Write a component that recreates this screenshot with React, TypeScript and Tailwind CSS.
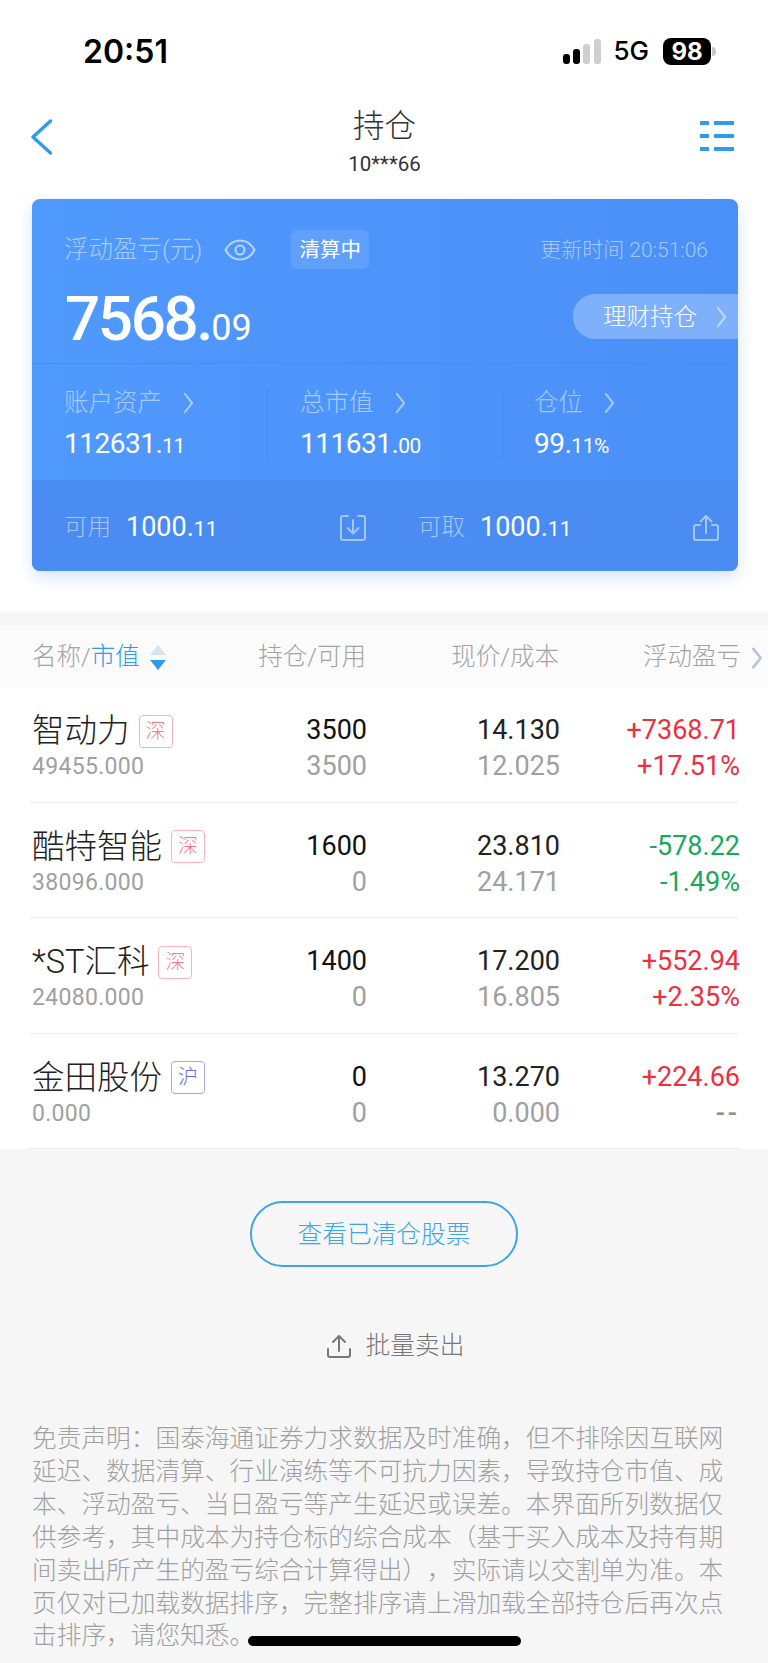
import React from "react";

const CJK = "font-['Roboto','Noto_Sans_CJK_SC',sans-serif]";

function Chevron({ className, sw = 2.2 }: { className: string; sw?: number }) {
  return (
    <svg viewBox="0 0 12 24" className={className} fill="none" stroke="currentColor" strokeWidth={sw} strokeLinecap="round" strokeLinejoin="round">
      <path d="M2 2l8 10-8 10" />
    </svg>
  );
}

function TrayUp({ className }: { className: string }) {
  return (
    <svg viewBox="0 0 26 27" className={className} fill="none" stroke="currentColor" strokeWidth="2" strokeLinecap="round" strokeLinejoin="round">
      <path d="M7 11H3a2 2 0 0 0-2 2v11a2 2 0 0 0 2 2h20a2 2 0 0 0 2-2V13a2 2 0 0 0-2-2h-4" />
      <path d="M13 19V2M7.500 7.500 13 2l5.500 5.500" />
    </svg>
  );
}

function TrayDown({ className }: { className: string }) {
  return (
    <svg viewBox="0 0 26 27" className={className} fill="none" stroke="currentColor" strokeWidth="2" strokeLinecap="round" strokeLinejoin="round">
      <path d="M8 2H3a2 2 0 0 0-2 2v20a2 2 0 0 0 2 2h20a2 2 0 0 0 2-2V4a2 2 0 0 0-2-2h-5" />
      <path d="M13 6v13M7.500 14l5.500 5.500 5.500-5.500" />
    </svg>
  );
}

function Stat({ label, int, dec, left }: { label: string; int: string; dec: string; left: string }) {
  return (
    <div className={left}>
      <div className="flex items-center h-[24px] text-[24.500px] leading-[24px] text-white/50 font-light">
        <span>{label}</span>
        <Chevron className="w-[11px] h-[22px] ml-[21px] text-white/50" />
      </div>
      <div className="mt-[15px] h-[28px] flex items-baseline text-white leading-[28px] tracking-[-0.5px]">
        <span className="text-[28px]">{int}</span>
        <span className="text-[21px]">{dec}</span>
      </div>
    </div>
  );
}

const rows = [
  { name: "智动力", ex: "深", mv: "49455.000", a: "3500", b: "3500", p: "14.130", c: "12.025", x: "+7368.71", y: "+17.51%", col: "text-[#ee2f3f]" },
  { name: "酷特智能", ex: "深", mv: "38096.000", a: "1600", b: "0", p: "23.810", c: "24.171", x: "-578.22", y: "-1.49%", col: "text-[#19a95b]" },
  { name: "*ST汇科", ex: "深", mv: "24080.000", a: "1400", b: "0", p: "17.200", c: "16.805", x: "+552.94", y: "+2.35%", col: "text-[#ee2f3f]" },
  { name: "金田股份", ex: "沪", mv: "0.000", a: "0", b: "0", p: "13.270", c: "0.000", x: "+224.66", y: "--", col: "text-[#ee2f3f]" },
];

export default function App() {
  return (
    <div className={`${CJK} relative w-[768px] h-[1663px] overflow-hidden bg-[#f6f6f6]`}>
      {/* top white area */}
      <div className="bg-white h-[611px]">
        {/* status bar */}
        <div className="h-[100px] pt-[34px] pl-[83px] pr-[52px] flex items-start justify-between">
          <span className="font-['Inter',sans-serif] text-[32px] leading-[36px] font-semibold text-black">20:51</span>
          <div className="flex items-center h-[36px] relative top-[-1px]">
            <svg viewBox="0 0 38 25" className="w-[38px] h-[25px]">
              <rect x="0" y="15" width="7" height="10" rx="3" fill="#000" />
              <rect x="10" y="10" width="7" height="15" rx="3" fill="#000" />
              <rect x="20" y="5" width="7" height="20" rx="3" fill="#cfcfcf" />
              <rect x="31" y="0" width="7" height="25" rx="3" fill="#cfcfcf" />
            </svg>
            <span className="ml-[12px] font-['Inter',sans-serif] text-[26px] leading-[36px] font-medium text-black">5G</span>
            <span className="ml-[14px] w-[48px] h-[27px] rounded-[8px] bg-black text-white font-['Inter',sans-serif] font-bold text-[24px] leading-[27px] text-center">98</span>
            <span className="ml-[1px] w-[4px] h-[9px] rounded-r-full bg-[#c9c9c9]" />
          </div>
        </div>
        {/* nav */}
        <div className="h-[99px] pl-[31px] pr-[34px] grid grid-cols-[1fr_auto_1fr] items-start">
          <svg viewBox="0 0 21 36" className="mt-[19px] w-[21px] h-[36px] text-[#2f9bec]" fill="none" stroke="currentColor" strokeWidth="3.400" strokeLinecap="round" strokeLinejoin="round">
            <path d="M19.500 2 2 18l17.500 16" />
          </svg>
          <div className="flex flex-col items-center mt-[9px] text-[#333] relative left-[2px]">
            <div className="text-[31.500px] leading-[36px] font-light">持仓</div>
            <div className="mt-[8px] text-[20.500px] leading-[22px]">10***66</div>
          </div>
          <div className="mt-[21px] w-[34px] justify-self-end flex flex-col gap-[9px]">
            {[0, 1, 2].map((i) => (
              <div key={i} className="flex gap-[5px] h-[4px]">
                <div className="w-[9px] bg-[#2f9bec]" />
                <div className="flex-1 bg-[#2f9bec]" />
              </div>
            ))}
          </div>
        </div>
        {/* card */}
        <div className="mx-[32px] w-[706px] h-[372px] rounded-[8px] overflow-hidden bg-gradient-to-r from-[#5099fd] to-[#4b90f8] shadow-[0_6px_16px_rgba(70,130,240,0.22)]">
          <div className="h-[165px] pt-[31px] border-b border-[#4a8df0]">
            <div className="flex items-center h-[39px] pl-[32px] pr-[30px]">
              <span className="text-[24.500px] leading-[24px] text-white/50 font-light">浮动盈亏(元)</span>
              <svg viewBox="0 0 32 22" className="ml-[22px] w-[32px] h-[22px] text-white/60" fill="none" stroke="currentColor" strokeWidth="2">
                <path d="M1.500 11C5 4.500 10 1.500 16 1.500S27 4.500 30.500 11C27 17.500 22 20.500 16 20.500S5 17.500 1.500 11Z" />
                <circle cx="16" cy="11" r="4.500" />
              </svg>
              <span className="ml-[35px] w-[78px] h-[39px] rounded-[6px] bg-white/10 text-white text-[20.500px] leading-[40px] text-center">清算中</span>
              <span className="ml-auto text-[21px] leading-[24px] text-white/50 font-light">更新时间 20:51:06</span>
            </div>
            <div className="flex items-start justify-between mt-[25px] pl-[33px]">
              <div className="flex items-baseline text-white h-[45px] leading-[49px]">
                <span className="text-[62px] font-medium tracking-[-2.400px]">7568.</span>
                <span className="text-[36px]">09</span>
              </div>
              <div className="w-[165px] h-[45px] rounded-l-[22px] bg-[#7eb0fb] flex items-center pl-[30px]">
                <span className="text-[23.500px] leading-[50px] text-white font-light">理财持仓</span>
                <Chevron className="ml-[19px] w-[11px] h-[22px] text-white/50" />
              </div>
            </div>
          </div>
          <div className="h-[116px] pt-[27px] flex">
            <Stat label="账户资产" int="112631." dec="11" left="w-[236px] pl-[32px] h-[70px] border-r border-dotted border-[#4388ea]" />
            <Stat label="总市值" int="111631." dec="00" left="w-[236px] pl-[32px] h-[70px] border-r border-dotted border-[#4388ea]" />
            <Stat label="仓位" int="99." dec="11%" left="pl-[30px]" />
          </div>
          <div className="h-[91px] bg-[#4a8cf2] flex items-center pl-[32px] pr-[18px] pt-[4px]">
            <span className="text-[23.500px] text-white/50 font-light">可用</span>
            <span className="ml-[15px] flex items-baseline text-white w-[214px]">
              <span className="text-[27px]">1000.</span>
              <span className="text-[21px]">11</span>
            </span>
            <TrayDown className="w-[26px] h-[27px] text-white/50" />
            <span className="ml-[52px] text-[23.500px] text-white/50 font-light">可取</span>
            <span className="ml-[15px] flex items-baseline text-white w-[213px]">
              <span className="text-[27px]">1000.</span>
              <span className="text-[21px]">11</span>
            </span>
            <TrayUp className="w-[26px] h-[27px] text-white/50" />
          </div>
        </div>
      </div>

      {/* table */}
      <div className="mt-[14px]">
        <div className="h-[62px] bg-[#fbfbfb] pl-[32px] pr-[5px] pt-[3px] grid grid-cols-[1fr_144px_193px_204px] items-center text-[24.500px] text-[#a3a3a3] font-light">
          <div className="flex items-center">
            <span>名称/</span>
            <span className="text-[#2e9bea]">市值</span>
            <svg viewBox="0 0 16 25" className="ml-[10px] w-[16px] h-[25px]">
              <path d="M8 0l8 10H0z" fill="#d8e2ea" />
              <path d="M0 15h16L8 25z" fill="#2e9bea" />
            </svg>
          </div>
          <div className="text-right">持仓/可用</div>
          <div className="text-right">现价/成本</div>
          <div className="flex items-center justify-end gap-[10px]">
            <span>浮动盈亏</span>
            <Chevron className="w-[12px] h-[22px] text-[#b4c6d8]" sw={3} />
          </div>
        </div>
        <div className="bg-white">
          {rows.map((r) => (
            <div key={r.name} className="mx-[30px] pl-[2px] h-[115.500px] border-b border-[#ececec] grid grid-cols-[188px_147px_193px_180px] pt-[25px]">
              <div>
                <div className="flex items-center h-[36px] pt-[2px] whitespace-nowrap">
                  <span className="text-[32.500px] leading-[36px] font-light text-[#222]">{r.name}</span>
                  <span className={`ml-[9px] w-[34px] h-[33px] shrink-0 rounded-[4px] border text-[20px] leading-[30px] text-center font-light ${r.ex === "沪" ? "border-[#a8a6ee] text-[#6d6ae0]" : "border-[#f9b4bb] text-[#f57a87]"}`}>{r.ex}</span>
                </div>
                <div className="text-[23px] leading-[28px] mt-[5px] text-[#a0a0a0] tracking-[0.3px]">{r.mv}</div>
              </div>
              <div className="text-right text-[27px] leading-[36px]">
                <div className="text-[#111]">{r.a}</div>
                <div className="text-[#a0a0a0]">{r.b}</div>
              </div>
              <div className="text-right text-[27px] leading-[36px]">
                <div className="text-[#222]">{r.p}</div>
                <div className="text-[#a0a0a0]">{r.c}</div>
              </div>
              <div className="text-right text-[27px] leading-[36px]">
                <div className={r.col}>{r.x}</div>
                <div className={r.y === "--" ? "text-[#909090] tracking-[3px] font-medium" : r.col}>{r.y}</div>
              </div>
            </div>
          ))}
        </div>
      </div>

      {/* actions */}
      <div className="mt-[52px] flex flex-col items-center">
        <button className="w-[268px] h-[66px] pt-[2px] rounded-[33px] border-2 border-[#3ba4ec] text-[24.700px] text-[#3ba4ec] font-light">查看已清仓股票</button>
        <div className="mt-[64px] flex items-center text-[#777] ml-[23px]">
          <svg viewBox="0 0 24 24" className="w-[24px] h-[24px]" fill="none" stroke="#777" strokeWidth="2" strokeLinecap="round" strokeLinejoin="round">
            <path d="M1 15v6a2 2 0 0 0 2 2h18a2 2 0 0 0 2-2v-6" />
            <path d="M12 17V2M6 8l6-6 6 6" />
          </svg>
          <span className="ml-[15px] text-[24.700px] leading-[30px] font-light">批量卖出</span>
        </div>
      </div>

      {/* disclaimer */}
      <p className="mt-[62px] ml-[32px] w-[695px] text-[24.700px] leading-[32.900px] text-[#a0a0a0] font-light [text-spacing-trim:space-all]">
        免责声明：国泰海通证券力求数据及时准确，但不排除因互联网延迟、数据清算、行业演练等不可抗力因素，导致持仓市值、成本、浮动盈亏、当日盈亏等产生延迟或误差。本界面所列数据仅供参考，其中成本为持仓标的综合成本（基于买入成本及持有期间卖出所产生的盈亏综合计算得出），实际请以交割单为准。本页仅对已加载数据排序，完整排序请上滑加载全部持仓后再次点击排序，请您知悉。
      </p>

      {/* home indicator */}
      <div className="absolute left-[248px] top-[1636px] w-[273px] h-[10px] rounded-full bg-black" />
    </div>
  );
}
